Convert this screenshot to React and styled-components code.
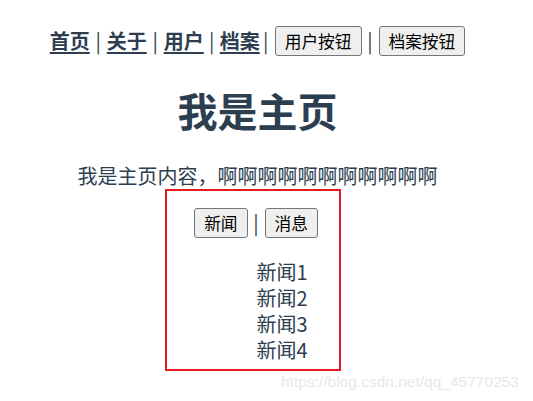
import React from 'react';
import styled, { createGlobalStyle } from 'styled-components';

const GlobalStyle = createGlobalStyle`
  html, body {
    margin: 0;
    padding: 0;
    background: #fff;
  }
  body {
    font-family: "Noto Sans CJK SC", "Liberation Sans", sans-serif;
    -webkit-font-smoothing: antialiased;
  }
`;

const Page = styled.div`
  position: relative;
  width: 533px;
  height: 401px;
  overflow: hidden;
`;

const AppRoot = styled.div`
  width: 515px;
  text-align: center;
  color: #2c3e50;
`;

const Nav = styled.nav`
  display: flex;
  align-items: center;
  justify-content: center;
  height: 30px;
  padding-top: 26px;
  font-size: 20px;
`;

const NavLink = styled.a`
  font-weight: bold;
  color: #2c3e50;
  text-decoration: underline;
  text-underline-offset: 3px;
  padding-right: ${p => p.$trail || 0}px;
  line-height: 30px;
  cursor: pointer;
`;

const Sep = styled.span`
  display: inline-block;
  width: ${p => p.$w}px;
  text-align: center;
  font-size: 20px;
  line-height: 30px;
  color: #2c3e50;
`;

const Gap = styled.span`
  display: inline-block;
  width: ${p => p.$w}px;
`;

const Button = styled.button`
  height: 30px;
  padding: 0 9px;
  font-family: "Noto Sans CJK SC", sans-serif;
  font-size: 16.7px;
  color: #000;
  background: #efefef;
  border: 1px solid #767676;
  border-radius: 3px;
  line-height: 28px;
`;

const Title = styled.h1`
  margin: 30px 0 0;
  font-size: 40px;
  line-height: 48px;
  font-weight: bold;
`;

const Content = styled.p`
  margin: 29px 0 0;
  font-size: 20px;
  line-height: 26px;
`;

const ViewBox = styled.div`
  box-sizing: border-box;
  width: 176px;
  height: 182px;
  margin-left: 165px;
  border: 2px solid #e41b23;
  padding-top: 17px;
`;

const SubNav = styled.div`
  display: flex;
  align-items: center;
  justify-content: center;
  height: 30px;
  padding-left: 6px;
`;

const NewsList = styled.ul`
  list-style: none;
  margin: 21px 0 0;
  padding-left: 58px;
  text-align: center;
  font-size: 20px;
`;

const NewsItem = styled.li`
  height: 26px;
  line-height: 26px;
`;

const Watermark = styled.div`
  position: absolute;
  left: 281px;
  top: 372px;
  font-family: "Liberation Sans", Arial, sans-serif;
  font-size: 15.5px;
  line-height: 20px;
  color: #e8e8e8;
  white-space: nowrap;
`;

const news = ['新闻1', '新闻2', '新闻3', '新闻4'];

export default function App() {
  return (
    <Page>
      <GlobalStyle />
      <AppRoot>
        <Nav>
          <NavLink>首页</NavLink>
          <Sep $w={17}>|</Sep>
          <NavLink>关于</NavLink>
          <Sep $w={17}>|</Sep>
          <NavLink>用户</NavLink>
          <Sep $w={16}>|</Sep>
          <NavLink $trail={3}>档案</NavLink>
          <Sep $w={6}>|</Sep>
          <Gap $w={6} />
          <Button>用户按钮</Button>
          <Sep $w={17}>|</Sep>
          <Button>档案按钮</Button>
        </Nav>
        <Title>我是主页</Title>
        <Content>我是主页内容，啊啊啊啊啊啊啊啊啊啊啊</Content>
        <ViewBox>
          <SubNav>
            <Button>新闻</Button>
            <Sep $w={17}>|</Sep>
            <Button>消息</Button>
          </SubNav>
          <NewsList>
            {news.map(n => (
              <NewsItem key={n}>{n}</NewsItem>
            ))}
          </NewsList>
        </ViewBox>
      </AppRoot>
      <Watermark>https://blog.csdn.net/qq_45770253</Watermark>
    </Page>
  );
}
